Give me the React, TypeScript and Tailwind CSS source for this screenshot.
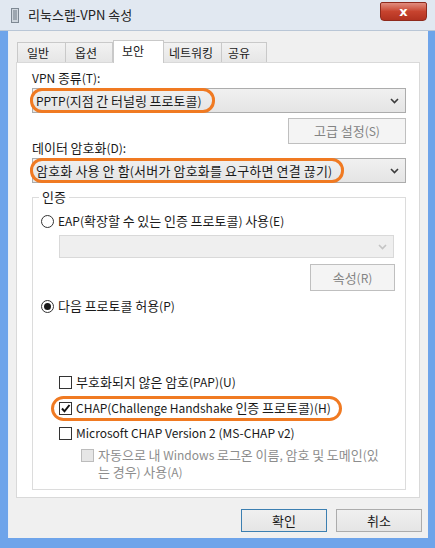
import React from "react";

const font = {
  fontFamily: '"Noto Sans CJK KR", "Noto Sans", sans-serif',
};

// Hangul in the reference is set wider than Noto's, so bump just those runs
function K({ t }: { t: string }) {
  return (
    <span>
      {t.split(/([\uAC00-\uD7A3]+)/).map((s, i) =>
        /[\uAC00-\uD7A3]/.test(s) ? (
          <span key={i} className="text-[13px]">
            {s}
          </span>
        ) : (
          s
        )
      )}
    </span>
  );
}

function Chevron({ disabled }: { disabled?: boolean }) {
  return (
    <svg width="9" height="6" viewBox="0 0 9 6" className="shrink-0">
      <path
        d="M1 1l3.5 3.5L8 1"
        fill="none"
        stroke={disabled ? "#c4c4c4" : "#3c3c3c"}
        strokeWidth="1.6"
      />
    </svg>
  );
}

function Radio({ checked }: { checked?: boolean }) {
  return (
    <span className="w-[13px] h-[13px] rounded-full border border-[#333] bg-white flex items-center justify-center shrink-0">
      {checked && <span className="w-[7px] h-[7px] rounded-full bg-[#1a1a1a]" />}
    </span>
  );
}

function Check({ checked, disabled }: { checked?: boolean; disabled?: boolean }) {
  return (
    <span
      className={
        disabled
          ? "block w-[13px] h-[13px] border border-[#bcbcbc] bg-[#e6e6e6] shrink-0"
          : "w-[13px] h-[13px] border border-[#333] bg-white flex items-center justify-center shrink-0"
      }
    >
      {checked && (
        <svg width="11" height="11" viewBox="0 0 11 11">
          <path d="M2 5.5l2.5 2.8L9.5 2" fill="none" stroke="#111" strokeWidth="2" />
        </svg>
      )}
    </span>
  );
}

export default function App() {
  return (
    <div
      className="w-[435px] h-[548px] bg-[#6ea4ea] overflow-hidden flex flex-col text-[12px] text-[#1a1a1a]"
      style={font}
    >
      {/* Title bar */}
      <div className="h-[31px] bg-[#e1e8f1] border-b border-[#b9c6d6] flex items-start shrink-0">
        <div className="flex items-center h-[30px] pl-[11px]">
          <svg width="8" height="15" viewBox="0 0 8 15">
            <rect x="0.5" y="0.5" width="7" height="14" fill="#cfd6de" stroke="#7d8893" />
            <path d="M2 3h4M2 5h4M2 7h4M2 9h4M2 11h4" stroke="#6a7682" strokeWidth="1" />
          </svg>
          <span className="ml-[9px] text-[13px] text-[#222]">리눅스랩-VPN 속성</span>
        </div>
        <div className="ml-auto mr-[8px] mt-[2px] w-[47px] h-[19px] rounded-b-[4px] rounded-t-[2px] bg-gradient-to-b from-[#e08c7e] via-[#c7432e] to-[#b23220] border border-[#8e2a1d] flex items-center justify-center">
          <span className="text-white font-bold text-[13px] leading-none" style={{ fontFamily: '"DejaVu Sans", sans-serif' }}>
            x
          </span>
        </div>
      </div>

      {/* Window body */}
      <div className="flex-1 flex pl-[8px] pr-[7px] pb-[10px]">
        <div className="flex-1 bg-[#f0f0f0] flex flex-col border-l border-[#e9eef5]">
          {/* Tabs */}
          <div className="flex items-end h-[22px] mt-[9px] ml-[8px]">
            <div className="h-[20px] w-[49px] border border-b-0 border-[#c9c9c9] bg-gradient-to-b from-[#f2f2f2] to-[#e6e6e6] pl-[9px] flex items-center">
              일반
            </div>
            <div className="h-[20px] w-[47px] border border-b-0 border-l-0 border-[#c9c9c9] bg-gradient-to-b from-[#f2f2f2] to-[#e6e6e6] pl-[9px] flex items-center">
              옵션
            </div>
            <div className="h-[23px] w-[51px] -mb-px relative z-10 border border-b-0 border-[#c9c9c9] bg-white pl-[8px] pt-[1px]">
              보안
            </div>
            <div className="h-[20px] w-[58px] border border-b-0 border-l-0 border-[#c9c9c9] bg-gradient-to-b from-[#f2f2f2] to-[#e6e6e6] pl-[5px] flex items-center">
              네트워킹
            </div>
            <div className="h-[20px] w-[45px] border border-b-0 border-l-0 border-[#c9c9c9] bg-gradient-to-b from-[#f2f2f2] to-[#e6e6e6] pl-[6px] flex items-center">
              공유
            </div>
          </div>

          {/* Tab panel */}
          <div className="ml-[7px] mr-[8px] h-[436px] border border-[#d9d9d9] bg-white flex flex-col pl-[15px] pr-[13px] pt-[7px]">
            <div className="h-[16px] leading-[16px]">
              <K t="VPN 종류(T):" />
            </div>
            <div className="mt-[2px] h-[25px] border border-[#acacac] bg-gradient-to-b from-[#f0f0f0] to-[#e5e5e5] flex items-center pr-[6px]">
              <span className="-ml-[3px] h-[25px] border-[3px] border-[#f07a22] rounded-[12px] flex items-center pl-[3px] pr-[10px]">
                <K t="PPTP(지점 간 터널링 프로토콜)" />
              </span>
              <span className="ml-auto">
                <Chevron />
              </span>
            </div>
            <div className="mt-[5px] flex justify-end">
              <div className="w-[118px] h-[26px] border border-[#bfbfbf] bg-[#f4f4f4] text-[#838383] flex items-center justify-center">
                <K t="고급 설정(S)" />
              </div>
            </div>
            <div className="-mt-[4px] h-[16px] leading-[16px]">
              <K t="데이터 암호화(D):" />
            </div>
            <div className="mt-[2px] h-[25px] border border-[#acacac] bg-gradient-to-b from-[#f0f0f0] to-[#e5e5e5] flex items-center pr-[6px]">
              <span className="-ml-[3px] h-[25px] border-[3px] border-[#f07a22] rounded-[12px] flex items-center pl-[3px] pr-[9px] tracking-[0.2px]">
                <K t="암호화 사용 안 함(서버가 암호화를 요구하면 연결 끊기)" />
              </span>
              <span className="ml-auto">
                <Chevron />
              </span>
            </div>

            {/* Authentication group */}
            <div className="mt-[14px] h-[293px] border border-[#dcdcdc] flex flex-col pl-[8px] pr-[11px]">
              <span className="-mt-[9px] ml-[-2px] self-start bg-white px-[3px] h-[16px] leading-[16px]">
                <K t="인증" />
              </span>
              <div className="mt-[8px] h-[16px] flex items-center gap-[4px]">
                <Radio />
                <K t="EAP(확장할 수 있는 인증 프로토콜) 사용(E)" />
              </div>
              <div className="mt-[6px] ml-[18px] h-[23px] border border-[#d9d9d9] bg-[#efefef] flex items-center justify-end pr-[6px]">
                <Chevron disabled />
              </div>
              <div className="mt-[6px] flex justify-end -mr-px">
                <div className="w-[85px] h-[27px] border border-[#bfbfbf] bg-[#f4f4f4] text-[#838383] flex items-center justify-center">
                  <K t="속성(R)" />
                </div>
              </div>
              <div className="mt-[7px] h-[16px] flex items-center gap-[4px]">
                <Radio checked />
                <K t="다음 프로토콜 허용(P)" />
              </div>
              <div className="mt-[60px] ml-[18px] h-[16px] flex items-center gap-[4px]">
                <Check />
                <K t="부호화되지 않은 암호(PAP)(U)" />
              </div>
              <div className="mt-[10px] ml-[10px] h-[16px] flex items-center">
                <span className="h-[25px] border-[3px] border-[#f07a22] rounded-[13px] flex items-center gap-[4px] pl-[5px] pr-[8px]">
                  <Check checked />
                  <K t="CHAP(Challenge Handshake 인증 프로토콜)(H)" />
                </span>
              </div>
              <div className="mt-[9px] ml-[18px] h-[16px] flex items-center gap-[4px]">
                <Check />
                <span>Microsoft CHAP Version 2 (MS-CHAP v2)</span>
              </div>
              <div className="mt-[5px] ml-[40px] flex items-start gap-[4px] text-[#8d8d8d]">
                <span className="block mt-[3px]">
                  <Check disabled />
                </span>
                <span className="flex flex-col">
                  <span className="h-[17px] leading-[17px]">
                    <K t="자동으로 내 Windows 로그온 이름, 암호 및 도메인(있" />
                  </span>
                  <span className="h-[17px] leading-[17px]">
                    <K t="는 경우) 사용(A)" />
                  </span>
                </span>
              </div>
            </div>
          </div>

          {/* Dialog buttons */}
          <div className="mt-[11px] flex justify-end gap-[9px] pr-[6px]">
            <div className="w-[86px] h-[23px] border border-[#3c7fb1] bg-gradient-to-b from-[#f0f0f0] to-[#e5e5e5] flex items-center justify-center">
              <K t="확인" />
            </div>
            <div className="w-[86px] h-[23px] border border-[#acacac] bg-gradient-to-b from-[#f0f0f0] to-[#e5e5e5] flex items-center justify-center">
              <K t="취소" />
            </div>
          </div>
        </div>
      </div>
    </div>
  );
}
